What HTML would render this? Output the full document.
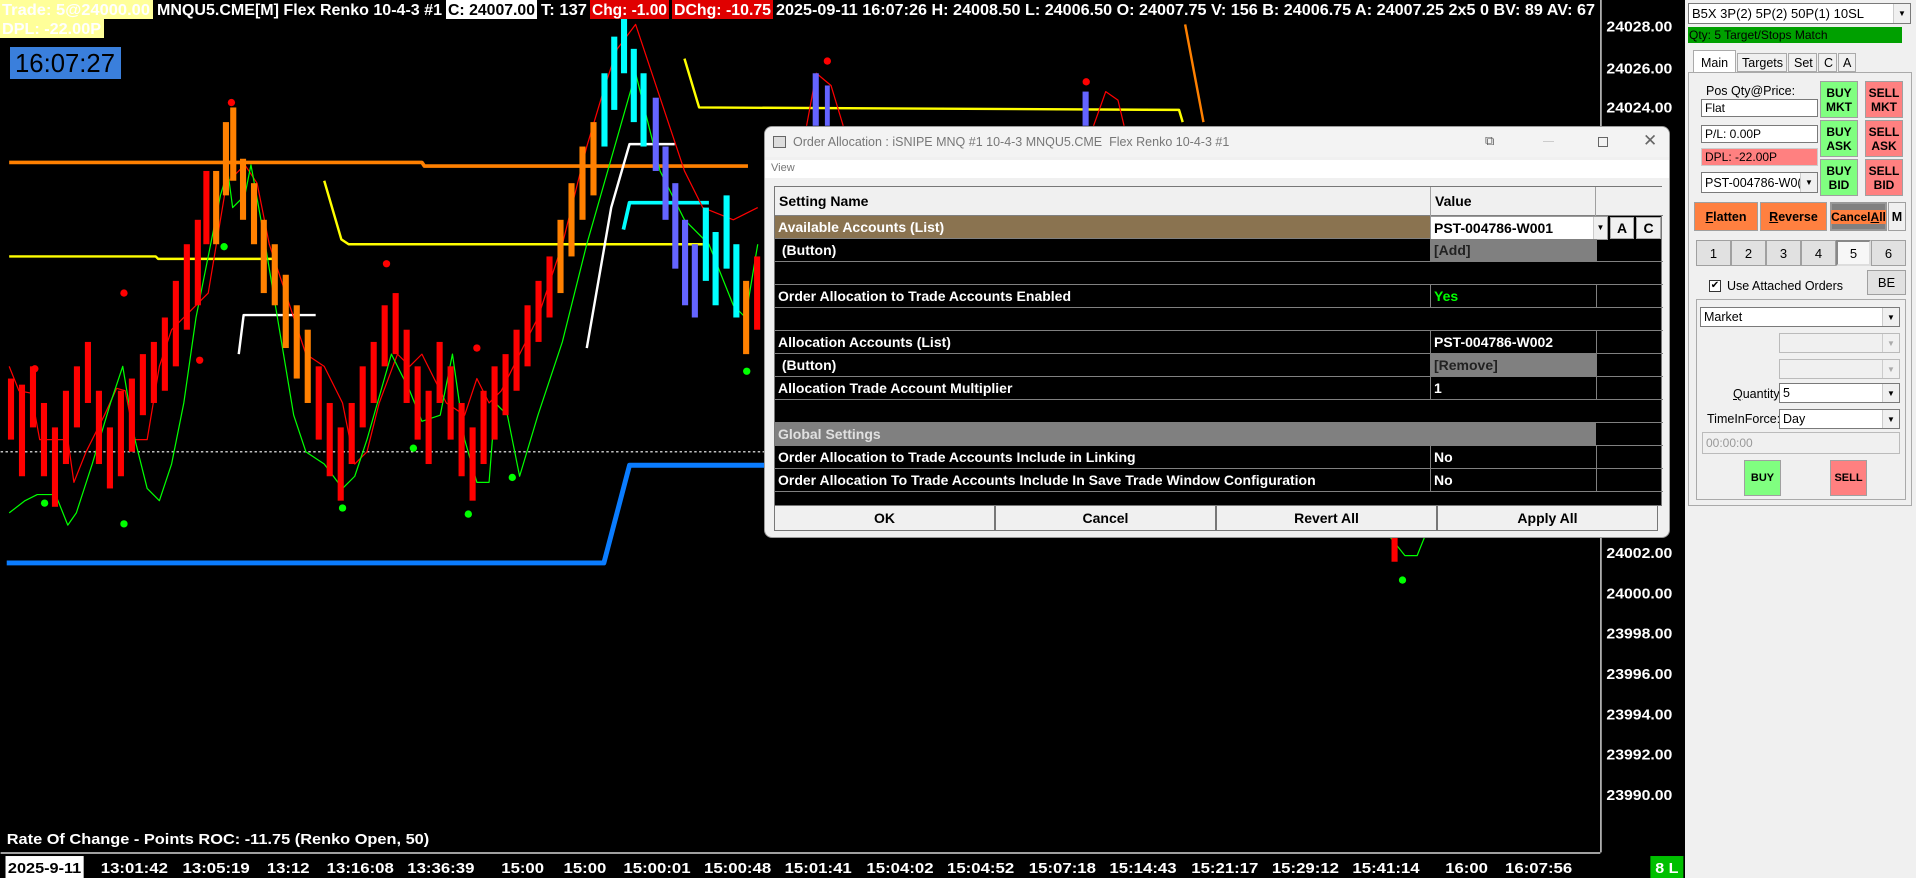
<!DOCTYPE html>
<html><head><meta charset="utf-8">
<style>
*{margin:0;padding:0;box-sizing:border-box}
body{width:1916px;height:878px;overflow:hidden;background:#000;position:relative;font-family:"Liberation Sans",Arial,sans-serif}
.abs{position:absolute}
#panel{position:absolute;left:1685px;top:0;width:231px;height:878px;background:#f0f0f0;font-size:12px;color:#000}
.btn{position:absolute;border:1px solid #a0a0a0;background:#e1e1e1;display:flex;align-items:center;justify-content:center;text-align:center;font-size:12px}
.inp{position:absolute;background:#fff;border:1px solid #7a7a7a;font-size:12px;padding-left:3px;display:flex;align-items:center}
.dd{position:absolute;right:0;top:0;bottom:0;width:17px;background:#f0f0f0;border-left:1px solid #ccc;display:flex;align-items:center;justify-content:center;font-size:8px}
#dlg{position:absolute;left:764px;top:126px;width:906px;height:412px;background:#f0f0f0;border:1px solid #9a9a9a;border-radius:8px;overflow:hidden}
.cell{position:absolute;height:23px;border-bottom:1px solid #808080;color:#fff;font-weight:bold;font-size:14px;line-height:22px;padding-left:3px;white-space:nowrap}
.v{border-left:1px solid #808080;border-right:1px solid #808080}
.x{left:821px;width:67px}
.bb{position:absolute;top:378px;height:26px;background:#f0f0f0;border:1px solid #777;font-weight:bold;font-size:14px;display:flex;align-items:center;justify-content:center}
</style></head><body>

<svg class="abs" style="left:0;top:0" width="1916" height="878" viewBox="0 0 1568 719">
<g fill="none" stroke-linejoin="round">
<line x1="0" y1="370" x2="1310" y2="370" stroke="#fff" stroke-dasharray="2,2" stroke-width="1"/>
<polyline points="7,133 345,133 347,136 612,136" stroke="#ff8000" stroke-width="3"/>
<polyline points="7,210 127,210 129,212 225,212" stroke="#ffff00" stroke-width="2"/>
<polyline points="265,148 279,196 285,200 575,200" stroke="#ffff00" stroke-width="2"/>
<polyline points="560,48 572,88 965,90 968,100" stroke="#ffff00" stroke-width="2"/>
<polyline points="970,20 985,100" stroke="#ff8000" stroke-width="2"/>
<polyline points="195,290 199,258 258,258" stroke="#fff" stroke-width="2"/>
<polyline points="480,285 500,170 515,118 552,118" stroke="#fff" stroke-width="2"/>
<polyline points="510,188 515,166 580,166" stroke="#00ffff" stroke-width="3"/>
<polyline points="5,461 494,461 515,381 640,381" stroke="#0a7cff" stroke-width="4"/>
<polyline points="7,300 15,320 25,322 32,360 45,360 55,360 60,395 70,370 85,340 95,318 102,320 110,360 120,360 130,300 140,270 160,250 170,240 185,150 200,135 210,150 220,200 240,260 250,290 265,300 280,330 290,380 300,370 310,330 325,290 335,300 345,290 365,330 380,340 390,310 400,330 410,320 420,300 440,260 460,200 480,120 495,70 505,40 520,20 540,80 560,140 575,170 600,180 610,175 620,170" stroke="#ff0000" stroke-width="1"/>
<polyline points="7,420 20,410 30,405 45,405 55,430 62,420 75,380 90,330 100,300 110,360 120,400 130,410 140,380 150,330 160,260 170,210 180,160 186,140 190,170 200,160 205,135 215,190 230,280 240,340 250,370 265,380 280,400 290,390 300,360 320,290 335,320 345,345 360,340 370,290 380,360 390,395 400,395 405,330 415,340 425,390 440,340 460,280 480,200 500,130 520,60 540,140 560,180 580,200 600,250 610,260 620,200" stroke="#00ff00" stroke-width="1"/>
<polyline points="660,103 668,60 680,70 690,103" stroke="#ff0000" stroke-width="1"/>
<polyline points="895,103 905,75 915,82 920,103" stroke="#ff0000" stroke-width="1"/>
<polyline points="1138,440 1150,455 1160,455 1166,440" stroke="#00ff00" stroke-width="1"/>
</g>
<g>
<rect x="6" y="310" width="5" height="50" fill="#f00"/><rect x="15" y="315" width="5" height="75" fill="#f00"/><rect x="24" y="300" width="5" height="50" fill="#f00"/><rect x="33" y="330" width="5" height="60" fill="#f00"/><rect x="42" y="350" width="5" height="65" fill="#f00"/><rect x="51" y="320" width="5" height="60" fill="#f00"/><rect x="60" y="300" width="5" height="50" fill="#f00"/><rect x="69" y="280" width="5" height="50" fill="#f00"/><rect x="78" y="320" width="5" height="60" fill="#f00"/><rect x="87" y="350" width="5" height="50" fill="#f00"/><rect x="96" y="320" width="5" height="70" fill="#f00"/><rect x="105" y="310" width="5" height="60" fill="#f00"/><rect x="114" y="290" width="5" height="50" fill="#f00"/><rect x="123" y="280" width="5" height="50" fill="#f00"/><rect x="132" y="260" width="5" height="60" fill="#f00"/><rect x="141" y="230" width="5" height="70" fill="#f00"/><rect x="150" y="200" width="5" height="70" fill="#f00"/><rect x="159" y="180" width="5" height="70" fill="#f00"/><rect x="166" y="140" width="5" height="60" fill="#f00"/>
<rect x="174" y="140" width="5" height="60" fill="#ff8000"/><rect x="182" y="100" width="5" height="60" fill="#ff8000"/><rect x="188" y="88" width="5" height="60" fill="#ff8000"/><rect x="196" y="130" width="5" height="50" fill="#ff8000"/><rect x="205" y="150" width="5" height="50" fill="#ff8000"/><rect x="213" y="180" width="5" height="60" fill="#ff8000"/><rect x="222" y="200" width="5" height="50" fill="#ff8000"/><rect x="231" y="225" width="5" height="60" fill="#ff8000"/><rect x="240" y="250" width="5" height="60" fill="#ff8000"/><rect x="249" y="270" width="5" height="60" fill="#ff8000"/>
<rect x="258" y="300" width="5" height="60" fill="#f00"/><rect x="267" y="330" width="5" height="60" fill="#f00"/><rect x="276" y="350" width="5" height="60" fill="#f00"/><rect x="285" y="330" width="5" height="50" fill="#f00"/><rect x="294" y="300" width="5" height="50" fill="#f00"/><rect x="303" y="280" width="5" height="50" fill="#f00"/><rect x="312" y="250" width="5" height="50" fill="#f00"/><rect x="321" y="240" width="5" height="50" fill="#f00"/><rect x="330" y="270" width="5" height="60" fill="#f00"/><rect x="339" y="300" width="5" height="60" fill="#f00"/><rect x="348" y="320" width="5" height="60" fill="#f00"/><rect x="357" y="280" width="5" height="50" fill="#f00"/><rect x="366" y="300" width="5" height="60" fill="#f00"/><rect x="375" y="330" width="5" height="60" fill="#f00"/><rect x="384" y="350" width="5" height="60" fill="#f00"/><rect x="393" y="320" width="5" height="60" fill="#f00"/><rect x="402" y="300" width="5" height="60" fill="#f00"/><rect x="411" y="290" width="5" height="50" fill="#f00"/><rect x="420" y="270" width="5" height="50" fill="#f00"/><rect x="429" y="250" width="5" height="50" fill="#f00"/><rect x="438" y="230" width="5" height="50" fill="#f00"/><rect x="447" y="210" width="5" height="50" fill="#f00"/>
<rect x="456" y="180" width="5" height="60" fill="#ff8000"/><rect x="465" y="150" width="5" height="60" fill="#ff8000"/><rect x="474" y="120" width="5" height="60" fill="#ff8000"/><rect x="483" y="100" width="5" height="60" fill="#ff8000"/>
<rect x="492" y="60" width="5" height="60" fill="#0ff"/><rect x="500" y="30" width="5" height="60" fill="#0ff"/><rect x="508" y="10" width="5" height="50" fill="#0ff"/><rect x="516" y="40" width="5" height="60" fill="#0ff"/><rect x="524" y="60" width="5" height="60" fill="#0ff"/>
<rect x="534" y="80" width="5" height="60" fill="#6464ff"/><rect x="542" y="120" width="5" height="60" fill="#6464ff"/><rect x="550" y="150" width="5" height="70" fill="#6464ff"/><rect x="558" y="180" width="5" height="70" fill="#6464ff"/><rect x="566" y="200" width="5" height="60" fill="#6464ff"/><rect x="575" y="170" width="5" height="60" fill="#0ff"/><rect x="583" y="190" width="5" height="60" fill="#0ff"/><rect x="592" y="160" width="5" height="60" fill="#0ff"/><rect x="600" y="200" width="5" height="60" fill="#0ff"/><rect x="608" y="230" width="5" height="60" fill="#ff8000"/><rect x="617" y="210" width="5" height="60" fill="#f00"/>
<rect x="665" y="60" width="5" height="43" fill="#6464ff"/><rect x="675" y="70" width="4" height="33" fill="#6464ff"/><rect x="886" y="75" width="5" height="28" fill="#6464ff"/><rect x="1139" y="440" width="5" height="20" fill="#f00"/>
</g>
<g fill="#f00"><circle cx="189" cy="84" r="3"/><circle cx="101" cy="240" r="3"/><circle cx="28" cy="302" r="3"/><circle cx="316" cy="216" r="3"/><circle cx="390" cy="285" r="3"/><circle cx="677" cy="50" r="3"/><circle cx="889" cy="67" r="3"/><circle cx="163" cy="295" r="3"/></g>
<g fill="#0f0"><circle cx="36" cy="412" r="3"/><circle cx="101" cy="429" r="3"/><circle cx="183" cy="202" r="3"/><circle cx="280" cy="416" r="3"/><circle cx="338" cy="367" r="3"/><circle cx="383" cy="421" r="3"/><circle cx="419" cy="391" r="3"/><circle cx="611" cy="304" r="3"/><circle cx="1148" cy="475" r="3"/></g>
<line x1="1310.5" y1="0" x2="1310.5" y2="698" stroke="#fff"/>
<line x1="0" y1="698.5" x2="1310" y2="698.5" stroke="#fff"/>
<g fill="#fff" font-weight="bold" font-size="12" font-family="Liberation Sans,Arial,sans-serif">
<text x="1315" y="26" textLength="54" lengthAdjust="spacingAndGlyphs">24028.00</text>
<text x="1315" y="60" textLength="54" lengthAdjust="spacingAndGlyphs">24026.00</text>
<text x="1315" y="92" textLength="54" lengthAdjust="spacingAndGlyphs">24024.00</text>
<text x="1315" y="457" textLength="54" lengthAdjust="spacingAndGlyphs">24002.00</text>
<text x="1315" y="490" textLength="54" lengthAdjust="spacingAndGlyphs">24000.00</text>
<text x="1315" y="523" textLength="54" lengthAdjust="spacingAndGlyphs">23998.00</text>
<text x="1315" y="556" textLength="54" lengthAdjust="spacingAndGlyphs">23996.00</text>
<text x="1315" y="589" textLength="54" lengthAdjust="spacingAndGlyphs">23994.00</text>
<text x="1315" y="622" textLength="54" lengthAdjust="spacingAndGlyphs">23992.00</text>
<text x="1315" y="655" textLength="54" lengthAdjust="spacingAndGlyphs">23990.00</text>
<text x="5" y="691" textLength="346" lengthAdjust="spacingAndGlyphs">Rate Of Change - Points  ROC: -11.75  (Renko Open, 50)</text>
<rect x="4" y="701" width="64" height="18" fill="#fff"/>
<text x="6" y="715" fill="#000" textLength="60" lengthAdjust="spacingAndGlyphs">2025-9-11</text>
<text x="82" y="715" textLength="55" lengthAdjust="spacingAndGlyphs">13:01:42</text>
<text x="149" y="715" textLength="55" lengthAdjust="spacingAndGlyphs">13:05:19</text>
<text x="218" y="715" textLength="35" lengthAdjust="spacingAndGlyphs">13:12</text>
<text x="267" y="715" textLength="55" lengthAdjust="spacingAndGlyphs">13:16:08</text>
<text x="333" y="715" textLength="55" lengthAdjust="spacingAndGlyphs">13:36:39</text>
<text x="410" y="715" textLength="35" lengthAdjust="spacingAndGlyphs">15:00</text>
<text x="461" y="715" textLength="35" lengthAdjust="spacingAndGlyphs">15:00</text>
<text x="510" y="715" textLength="55" lengthAdjust="spacingAndGlyphs">15:00:01</text>
<text x="576" y="715" textLength="55" lengthAdjust="spacingAndGlyphs">15:00:48</text>
<text x="642" y="715" textLength="55" lengthAdjust="spacingAndGlyphs">15:01:41</text>
<text x="709" y="715" textLength="55" lengthAdjust="spacingAndGlyphs">15:04:02</text>
<text x="775" y="715" textLength="55" lengthAdjust="spacingAndGlyphs">15:04:52</text>
<text x="842" y="715" textLength="55" lengthAdjust="spacingAndGlyphs">15:07:18</text>
<text x="908" y="715" textLength="55" lengthAdjust="spacingAndGlyphs">15:14:43</text>
<text x="975" y="715" textLength="55" lengthAdjust="spacingAndGlyphs">15:21:17</text>
<text x="1041" y="715" textLength="55" lengthAdjust="spacingAndGlyphs">15:29:12</text>
<text x="1107" y="715" textLength="55" lengthAdjust="spacingAndGlyphs">15:41:14</text>
<text x="1183" y="715" textLength="35" lengthAdjust="spacingAndGlyphs">16:00</text>
<text x="1232" y="715" textLength="55" lengthAdjust="spacingAndGlyphs">16:07:56</text>
<rect x="1351" y="701" width="27" height="18" fill="#00c000"/>
<text x="1355" y="715" textLength="19" lengthAdjust="spacingAndGlyphs">8 L</text>
</g>
</svg>

<svg class="abs" style="left:0;top:0" width="1600" height="82">
<g font-family="Liberation Sans,Arial,sans-serif" font-weight="bold" font-size="16">
<rect x="0" y="0" width="153" height="19" fill="#ffff99"/>
<text x="2" y="15" fill="#fff" textLength="148" lengthAdjust="spacingAndGlyphs">Trade: 5@24000.00</text>
<rect x="0" y="19" width="104" height="19" fill="#ffff99"/>
<text x="2" y="34" fill="#fff" textLength="99" lengthAdjust="spacingAndGlyphs">DPL: -22.00P</text>
<text x="157" y="15" fill="#fff" textLength="285" lengthAdjust="spacingAndGlyphs">MNQU5.CME[M]  Flex Renko 10-4-3 #1</text>
<rect x="446" y="0" width="91" height="19" fill="#fff"/>
<text x="448" y="15" fill="#000" textLength="87" lengthAdjust="spacingAndGlyphs">C: 24007.00</text>
<text x="541" y="15" fill="#fff" textLength="46" lengthAdjust="spacingAndGlyphs">T: 137</text>
<rect x="590" y="0" width="79" height="19" fill="#e00000"/>
<text x="592" y="15" fill="#fff" textLength="75" lengthAdjust="spacingAndGlyphs">Chg: -1.00</text>
<rect x="672" y="0" width="101" height="19" fill="#e00000"/>
<text x="674" y="15" fill="#fff" textLength="97" lengthAdjust="spacingAndGlyphs">DChg: -10.75</text>
<text x="776" y="15" fill="#fff" textLength="819" lengthAdjust="spacingAndGlyphs">2025-09-11 16:07:26 H: 24008.50 L: 24006.50 O: 24007.75 V: 156 B: 24006.75 A: 24007.25 2x5 0 BV: 89 AV: 67</text>
<rect x="10" y="47" width="111" height="32" fill="#3a7fdc"/>
<text x="15" y="72" fill="#000" font-size="26" font-weight="normal" textLength="100" lengthAdjust="spacingAndGlyphs">16:07:27</text>
</g></svg>

<div id="dlg">
 <div class="abs" style="left:0;top:0;width:906px;height:30px;background:#f3f3f3"></div>
 <div class="abs" style="left:8px;top:9px;width:13px;height:12px;border:1px solid #666;background:#ddd"></div>
 <div class="abs" style="left:28px;top:8px;font-size:12.5px;color:#777;white-space:nowrap">Order Allocation : iSNIPE MNQ #1 10-4-3 MNQU5.CME&nbsp; Flex Renko 10-4-3 #1</div>
 <div class="abs" style="left:720px;top:6px;font-size:13px;color:#555">⧉</div>
 <div class="abs" style="left:778px;top:14px;width:11px;height:1px;background:#ccc"></div>
 <div class="abs" style="left:833px;top:10px;width:10px;height:10px;border:1px solid #666"></div>
 <div class="abs" style="left:878px;top:4px;font-size:17px;color:#666">✕</div>
 <div class="abs" style="left:0;top:33px;width:906px;height:18px;background:#fff;font-size:11px;color:#777;padding:2px 6px">View</div>
 <div class="abs" style="left:9px;top:59px;width:888px;height:320px;background:#000;border:1px solid #777">
  <div class="abs" style="left:0;top:0;width:888px;height:29px;background:#f0f0f0;border-bottom:1px solid #808080"></div>
  <div class="abs" style="left:4px;top:6px;font-weight:bold;font-size:14px">Setting Name</div>
  <div class="abs" style="left:655px;top:0;width:1px;height:29px;background:#a0a0a0"></div>
  <div class="abs" style="left:820px;top:0;width:1px;height:29px;background:#a0a0a0"></div>
  <div class="abs" style="left:660px;top:6px;font-weight:bold;font-size:14px">Value</div>
  <div class="cell" style="left:0;top:29px;width:655px;background:#8a7350">Available Accounts (List)</div>
  <div class="abs" style="left:655px;top:29px;width:178px;height:24px;background:#fff;border:1px solid #999;font-weight:bold;font-size:14px;line-height:22px;padding-left:3px">PST-004786-W001<div class="dd" style="width:14px">▼</div></div>
  <div class="abs" style="left:835px;top:30px;width:24px;height:22px;background:#f0f0f0;border:1px solid #aaa;font-weight:bold;font-size:14px;text-align:center;line-height:20px">A</div>
  <div class="abs" style="left:861px;top:30px;width:25px;height:22px;background:#f0f0f0;border:1px solid #aaa;font-weight:bold;font-size:14px;text-align:center;line-height:20px">C</div>
  <div class="cell" style="left:0;top:52px;width:655px">&nbsp;(Button)</div>
  <div class="cell v" style="left:655px;top:52px;width:167px;background:#808080;color:#222">[Add]</div>
  <div class="cell x" style="top:52px"></div>
  <div class="cell" style="left:0;top:75px;width:888px"></div>
  <div class="cell" style="left:0;top:98px;width:655px">Order Allocation to Trade Accounts Enabled</div>
  <div class="cell v" style="left:655px;top:98px;width:167px;color:#0f0">Yes</div>
  <div class="cell x" style="top:98px"></div>
  <div class="cell" style="left:0;top:121px;width:888px"></div>
  <div class="cell" style="left:0;top:144px;width:655px">Allocation Accounts (List)</div>
  <div class="cell v" style="left:655px;top:144px;width:167px">PST-004786-W002</div>
  <div class="cell x" style="top:144px"></div>
  <div class="cell" style="left:0;top:167px;width:655px">&nbsp;(Button)</div>
  <div class="cell v" style="left:655px;top:167px;width:167px;background:#808080;color:#222">[Remove]</div>
  <div class="cell x" style="top:167px"></div>
  <div class="cell" style="left:0;top:190px;width:655px">Allocation Trade Account Multiplier</div>
  <div class="cell v" style="left:655px;top:190px;width:167px">1</div>
  <div class="cell x" style="top:190px"></div>
  <div class="cell" style="left:0;top:213px;width:888px"></div>
  <div class="cell" style="left:0;top:236px;width:821px;background:#808080;color:#e0e0e0">Global Settings</div>
  <div class="cell x" style="top:236px"></div>
  <div class="cell" style="left:0;top:259px;width:655px">Order Allocation to Trade Accounts Include in Linking</div>
  <div class="cell v" style="left:655px;top:259px;width:167px">No</div>
  <div class="cell x" style="top:259px"></div>
  <div class="cell" style="left:0;top:282px;width:655px">Order Allocation To Trade Accounts Include In Save Trade Window Configuration</div>
  <div class="cell v" style="left:655px;top:282px;width:167px">No</div>
  <div class="cell x" style="top:282px"></div>
 </div>
 <div class="bb" style="left:9px;width:221px">OK</div>
 <div class="bb" style="left:230px;width:221px">Cancel</div>
 <div class="bb" style="left:451px;width:221px">Revert All</div>
 <div class="bb" style="left:672px;width:221px">Apply All</div>
</div>

<div id="panel">
 <div class="inp" style="left:3px;top:3px;width:223px;height:21px;font-size:13px">B5X 3P(2) 5P(2) 50P(1) 10SL<div class="dd">▼</div></div>
 <div class="abs" style="left:3px;top:27px;width:214px;height:16px;background:#00a000;font-size:12px;padding-left:1px;line-height:16px">Qty: 5 Target/Stops Match</div>
 <div class="abs" style="left:8px;top:50px;width:43px;height:23px;background:#fff;border:1px solid #aaa;border-bottom:none;font-size:12.5px;padding:5px 0 0 7px">Main</div>
 <div class="abs" style="left:52px;top:53px;width:50px;height:19px;border:1px solid #aaa;font-size:12.5px;padding:2px 0 0 4px">Targets</div>
 <div class="abs" style="left:103px;top:53px;width:29px;height:19px;border:1px solid #aaa;font-size:12.5px;padding:2px 0 0 5px">Set</div>
 <div class="abs" style="left:133px;top:53px;width:19px;height:19px;border:1px solid #aaa;font-size:12.5px;padding:2px 0 0 5px">C</div>
 <div class="abs" style="left:153px;top:53px;width:18px;height:19px;border:1px solid #aaa;font-size:12.5px;padding:2px 0 0 4px">A</div>
 <div class="abs" style="left:3px;top:72px;width:224px;height:434px;border:1px solid #aaa;background:#f0f0f0"></div>
 <div class="abs" style="left:21px;top:84px;font-size:12.5px">Pos Qty@Price:</div>
 <div class="inp" style="left:16px;top:99px;width:117px;height:18px">Flat</div>
 <div class="inp" style="left:16px;top:125px;width:117px;height:18px">P/L: 0.00P</div>
 <div class="inp" style="left:16px;top:148px;width:117px;height:18px;background:#ff8080;border-color:#ccc">DPL: -22.00P</div>
 <div class="inp" style="left:16px;top:172px;width:117px;height:21px;font-size:12.5px">PST-004786-W0(<div class="dd">▼</div></div>
 <div class="btn" style="left:135px;top:81px;width:38px;height:37px;background:#80ff80;font-weight:bold">BUY<br>MKT</div>
 <div class="btn" style="left:180px;top:81px;width:38px;height:37px;background:#ff8080;font-weight:bold">SELL<br>MKT</div>
 <div class="btn" style="left:135px;top:120px;width:38px;height:37px;background:#80ff80;font-weight:bold">BUY<br>ASK</div>
 <div class="btn" style="left:180px;top:120px;width:38px;height:37px;background:#ff8080;font-weight:bold">SELL<br>ASK</div>
 <div class="btn" style="left:135px;top:159px;width:38px;height:37px;background:#80ff80;font-weight:bold">BUY<br>BID</div>
 <div class="btn" style="left:180px;top:159px;width:38px;height:37px;background:#ff8080;font-weight:bold">SELL<br>BID</div>
 <div class="btn" style="left:9px;top:202px;width:64px;height:29px;background:#ff8040;font-weight:bold;font-size:12.5px"><u>F</u>latten</div>
 <div class="btn" style="left:75px;top:202px;width:67px;height:29px;background:#ff8040;font-weight:bold;font-size:12.5px"><u>R</u>everse</div>
 <div class="btn" style="left:145px;top:202px;width:57px;height:29px;background:#808080;font-weight:bold;font-size:12px;border:2px solid #999"><span style="background:#ff8040">Cancel<u>A</u>ll</span></div>
 <div class="btn" style="left:203px;top:202px;width:18px;height:29px;font-weight:bold;font-size:12.5px;background:#f0f0f0">M</div>
 <div class="btn" style="left:11px;top:240px;width:35px;height:26px;font-size:13px">1</div>
 <div class="btn" style="left:46px;top:240px;width:35px;height:26px;font-size:13px">2</div>
 <div class="btn" style="left:81px;top:240px;width:35px;height:26px;font-size:13px">3</div>
 <div class="btn" style="left:116px;top:240px;width:35px;height:26px;font-size:13px">4</div>
 <div class="btn" style="left:151px;top:240px;width:35px;height:26px;font-size:13px;background:#f7f7f7;border:2px solid #888;border-right-color:#ddd;border-bottom-color:#ddd">5</div>
 <div class="btn" style="left:186px;top:240px;width:35px;height:26px;font-size:13px">6</div>
 <div class="abs" style="left:24px;top:280px;width:12px;height:12px;border:1px solid #333;background:#fff;font-size:10px;line-height:10px;text-align:center">✔</div>
 <div class="abs" style="left:42px;top:279px;font-size:12.5px">Use Attached Orders</div>
 <div class="btn" style="left:182px;top:270px;width:39px;height:25px;font-size:13px">BE</div>
 <div class="abs" style="left:11px;top:299px;width:210px;height:201px;border:1px solid #aaa"></div>
 <div class="inp" style="left:15px;top:307px;width:200px;height:20px;font-size:12.5px">Market<div class="dd">▼</div></div>
 <div class="inp" style="left:94px;top:333px;width:121px;height:20px;background:#f0f0f0;border-color:#bbb"><div class="dd" style="color:#aaa">▼</div></div>
 <div class="inp" style="left:94px;top:359px;width:121px;height:20px;background:#f0f0f0;border-color:#bbb"><div class="dd" style="color:#aaa">▼</div></div>
 <div class="abs" style="left:48px;top:387px;font-size:12.5px"><u>Q</u>uantity:</div>
 <div class="inp" style="left:94px;top:383px;width:121px;height:20px;font-size:12.5px">5<div class="dd">▼</div></div>
 <div class="abs" style="left:22px;top:412px;font-size:12.5px">TimeInForce:</div>
 <div class="inp" style="left:94px;top:409px;width:121px;height:20px;font-size:12.5px">Day<div class="dd">▼</div></div>
 <div class="inp" style="left:17px;top:432px;width:198px;height:22px;background:#f0f0f0;border-color:#bbb;color:#999">00:00:00</div>
 <div class="btn" style="left:59px;top:460px;width:37px;height:36px;background:#80ff80;font-weight:bold;font-size:11px">BUY</div>
 <div class="btn" style="left:145px;top:460px;width:37px;height:36px;background:#ff8080;font-weight:bold;font-size:11px">SELL</div>
</div>
</body></html>
